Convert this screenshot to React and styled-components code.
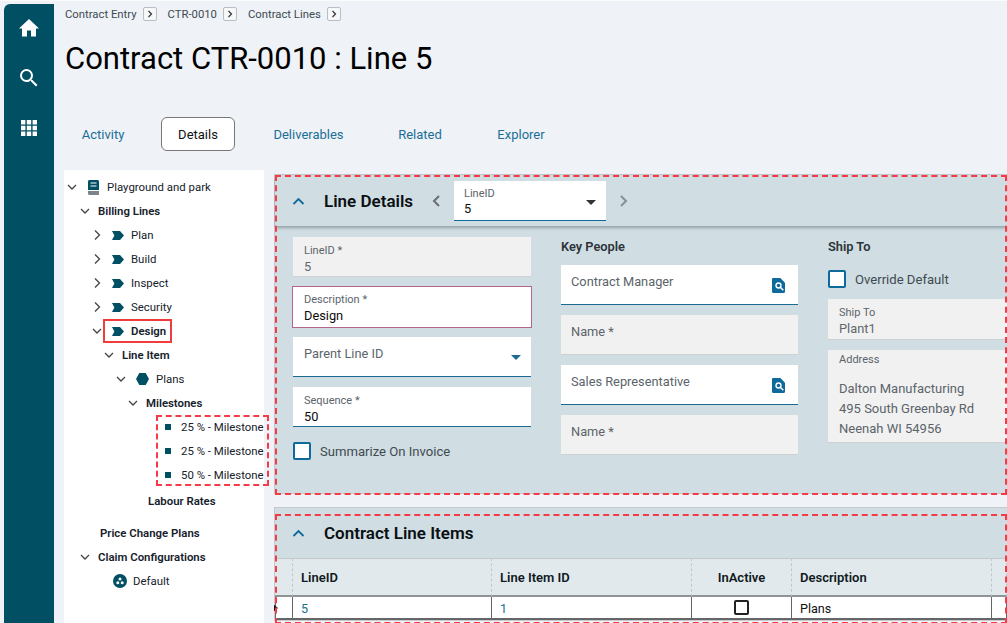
import React from "react";
import styled, { createGlobalStyle } from "styled-components";

const FONT = `Roboto, "Noto Sans", sans-serif`;
const TEAL = "#004f63";
const BLUE = "#0f6a9c";

const Global = createGlobalStyle`
  html, body { margin: 0; padding: 0; height: 100%; overflow: hidden; }
  body { background: #eff2f6; font-family: ${FONT}; }
  #root { height: 100%; }
  * { box-sizing: border-box; }
`;

const Page = styled.div`
  display: flex;
  height: 623px;
  width: 1007px;
  padding: 3px 0 0 4px;
  border-top: 1px solid #fafafa;
  overflow: hidden;
  position: relative;
`;
const Rail = styled.nav`
  flex: 0 0 50px;
  background: ${TEAL};
  border-top-left-radius: 6px;
  display: flex;
  flex-direction: column;
  align-items: center;
  padding-top: 12px;
  gap: 26px;
`;
const RailIcon = styled.svg`
  width: 24px;
  height: 24px;
  fill: #fff;
  display: block;
`;
const Main = styled.main`
  flex: 1;
  min-width: 0;
  display: flex;
  flex-direction: column;
  padding-left: 10px;
`;
const Crumbs = styled.div`
  display: flex;
  align-items: center;
  height: 22px;
  margin-top: -1px;
  font-size: 11.3px;
  color: #3c4a52;
`;
const Crumb = styled.span`
  margin-left: ${(p) => p.$gap}px;
`;
const CrumbBtn = styled.span`
  width: 14px;
  height: 14px;
  margin-left: 6px;
  border: 1px solid #b9bec2;
  border-radius: 2px;
  background: #f6f7f8;
  display: flex;
  align-items: center;
  justify-content: center;
`;
const Title = styled.h1`
  margin: 12px 0 0 1px;
  height: 44px;
  font-size: 31px;
  line-height: 44px;
  font-weight: 400;
  color: #000;
  white-space: nowrap;
`;
const Tabs = styled.div`
  display: flex;
  align-items: center;
  height: 34px;
  margin-top: 36px;
  font-size: 13px;
`;
const Tab = styled.span`
  color: #1b6f96;
  width: ${(p) => p.$w}px;
  height: 34px;
  display: flex;
  align-items: center;
  justify-content: center;
  margin-left: ${(p) => p.$ml || 0}px;
`;
const ActiveTab = styled(Tab)`
  color: #111;
  background: #fff;
  border: 1px solid #777;
  border-radius: 6px;
`;
const Content = styled.div`
  display: flex;
  margin-top: 19px;
  flex: 1;
  min-height: 0;
  gap: 10px;
`;
const Tree = styled.aside`
  flex: 0 0 200px;
  min-width: 0;
  background: #fff;
  padding-top: 5px;
  font-size: 11.4px;
  color: #15212b;
`;
const Row = styled.div`
  display: flex;
  align-items: center;
  height: ${(p) => p.$h || 24}px;
  padding-left: ${(p) => p.$indent}px;
  margin-top: ${(p) => p.$mt || 0}px;
  white-space: nowrap;
  font-weight: ${(p) => (p.$bold ? 600 : 400)};
  position: relative;
`;
const ChevSlot = styled.span`
  width: 16px;
  display: flex;
  justify-content: center;
  flex: none;
`;
const NodeIcon = styled.svg`
  flex: none;
  margin-left: ${(p) => p.$ml ?? 6}px;
  margin-right: ${(p) => p.$mr ?? 6}px;
`;
const Label = styled.span`
  margin-left: ${(p) => p.$ml || 0}px;
`;
const Solid = styled.div`
  position: absolute;
  left: 103px;
  top: 318px;
  width: 69px;
  height: 24px;
  border: 2px solid #ef3d3d;
  pointer-events: none;
`;
const Dash = styled.div`
  position: absolute;
  left: ${(p) => p.$x}px;
  top: ${(p) => p.$y}px;
  width: ${(p) => p.$w}px;
  height: ${(p) => p.$h}px;
  border: 2px dashed #f43b46;
  pointer-events: none;
  z-index: 5;
`;
const Panels = styled.div`
  flex: 1;
  min-width: 0;
  display: flex;
  flex-direction: column;
  padding-top: 4px;
  overflow: hidden;
`;
const Panel = styled.section`
  background: #d0dde3;
  border: 1px solid #c4c9cc;
  border-right: 0;
  height: ${(p) => p.$h}px;
  margin-top: ${(p) => p.$mt || 0}px;
  flex: none;
`;
const PanelHead = styled.header`
  display: flex;
  align-items: center;
  height: ${(p) => p.$h}px;
  padding-left: 17px;
  box-shadow: ${(p) => (p.$shadow ? "0 2px 3px rgba(70,90,100,.45)" : "none")};
  position: relative;
`;
const PanelTitle = styled.h2`
  margin: 0 0 0 19px;
  width: ${(p) => p.$w || "auto"};
  font-size: 17px;
  font-weight: 600;
  color: #0a0f12;
  white-space: nowrap;
`;
const FieldLabel = styled.div`
  font-size: 11px;
  line-height: 14px;
  color: #5b646b;
  white-space: nowrap;
`;
const FieldValue = styled.div`
  font-size: 12.8px;
  line-height: 17px;
  color: ${(p) => (p.$muted ? "#5f676d" : "#0c0c0c")};
  white-space: nowrap;
`;
const Picker = styled.div`
  width: 152px;
  height: 40px;
  background: #fff;
  border-bottom: 1px solid ${BLUE};
  padding: 6px 10px 0;
  position: relative;
  margin: 0 14px 0 14px;
  ${FieldValue} {
    margin-top: -1px;
  }
`;
const Caret = styled.span`
  position: absolute;
  right: ${(p) => p.$r || 10}px;
  bottom: ${(p) => p.$b || 11}px;
  width: 0;
  height: 0;
  border-left: 5px solid transparent;
  border-right: 5px solid transparent;
  border-top: 5px solid ${(p) => p.$c || "#333"};
`;
const Columns = styled.div`
  display: flex;
  padding: 11px 0 0 18px;
  gap: 30px;
`;
const Column = styled.div`
  width: ${(p) => p.$w}px;
  flex: none;
  display: flex;
  flex-direction: column;
  gap: 10px;
`;
const ColumnTitle = styled.div`
  font-size: 12.8px;
  line-height: 20px;
  font-weight: 600;
  color: #2c343a;
  height: 18px;
`;
const Field = styled.div`
  position: relative;
  height: ${(p) => p.$h || 40}px;
  padding: ${(p) => (p.$big ? "8px 10px 0" : "7px 11px 0")};
  background: ${(p) => (p.$grey ? "#f1f1f1" : "#fff")};
  border-bottom: 1px solid ${(p) => (p.$grey ? "#cdd1d3" : "#1a6a93")};
  flex: none;
`;
const AddressField = styled(Field)`
  padding-top: 3px;
`;
const AddressLines = styled.div`
  margin-top: 12px;
`;
const FocusField = styled(Field)`
  height: 42px;
  margin: -1px;
  border: 1px solid #b5648c;
  width: 240px;
  padding: 6px 11px 0;
`;
const BigLabel = styled.div`
  font-size: 12.8px;
  line-height: 18px;
  color: #5b646b;
  white-space: nowrap;
  padding-left: ${(p) => p.$pl || 0}px;
`;
const CheckRow = styled.div`
  display: flex;
  align-items: center;
  gap: 9px;
  font-size: 13.1px;
  color: #404a50;
  height: 18px;
  margin-top: 5px;
  margin-bottom: ${(p) => p.$mb || 0}px;
  white-space: nowrap;
`;
const Box = styled.span`
  width: 18px;
  height: 18px;
  border: 2px solid ${BLUE};
  border-radius: 2px;
  background: #fff;
  flex: none;
`;
const AddrLine = styled.div`
  font-size: 13px;
  line-height: 20px;
  color: #5b646b;
  white-space: nowrap;
`;
const Lookup = styled.svg`
  position: absolute;
  right: 13px;
  top: 13px;
`;
const Table = styled.div`
  display: grid;
  grid-template-columns: 18px 199px 200px 100px 200px 1fr;
`;
const Th = styled.div`
  height: 39px;
  background: #e2e9ed;
  border-top: 1px solid #c4c9cc;
  border-bottom: 2px solid #8f9497;
  border-right: 1px dashed #c2c7ca;
  display: flex;
  align-items: center;
  justify-content: ${(p) => (p.$center ? "center" : "flex-start")};
  padding-left: ${(p) => (p.$center ? 0 : 8)}px;
  padding-top: 1px;
  font-size: 13px;
  font-weight: 600;
  color: #0f1a22;
`;
const Td = styled.div`
  height: 23px;
  background: #fff;
  border-right: 1px solid #666;
  border-bottom: 2px solid #666;
  display: flex;
  align-items: center;
  justify-content: ${(p) => (p.$center ? "center" : "flex-start")};
  padding-left: ${(p) => (p.$center ? 0 : 8)}px;
  padding-top: ${(p) => (p.$center ? 0 : 1)}px;
  font-size: 12.6px;
  color: ${(p) => (p.$link ? "#1b6f96" : "#111")};
`;
const Marker = styled(Td)`
  border-left: 1px solid #666;
  padding-left: 0;
  color: #111;
`;
const CellBox = styled.span`
  width: 15px;
  height: 15px;
  border: 2px solid #222;
  border-radius: 2px;
`;

const Chev = ({ dir }) => (
  <svg width="12" height="12" viewBox="0 0 12 12" fill="none" stroke="#444" strokeWidth="1.3">
    {dir === "down" ? <path d="M2 4l4 4 4-4" /> : <path d="M4 1.5l4.5 4.5L4 10.5" />}
  </svg>
);
const Tag = () => (
  <NodeIcon $ml={7} $mr={7} width="12" height="9" viewBox="0 0 12 9">
    <path d="M0 0h8l4 4.5L8 9H0l2.4-4.5z" fill={TEAL} />
  </NodeIcon>
);
const Lens = () => (
  <Lookup width="13" height="15" viewBox="0 0 14 16">
    <path d="M0 1.2C0 .5.5 0 1.2 0H9l5 5v9.8c0 .7-.5 1.2-1.2 1.2H1.2C.5 16 0 15.5 0 14.8z" fill={BLUE} />
    <circle cx="7" cy="8" r="3.4" fill="#fff" />
    <circle cx="7" cy="8" r="1.9" fill={BLUE} />
    <path d="M9.2 10.2l3 3" stroke="#fff" strokeWidth="1.6" />
  </Lookup>
);
const CrumbArrow = () => (
  <svg width="6" height="8" viewBox="0 0 6 8" fill="none" stroke="#333" strokeWidth="1.2"><path d="M1.5 1l3 3-3 3" /></svg>
);
const CollapseIcon = () => (
  <svg width="13" height="8" viewBox="0 0 13 8" fill="none" stroke={BLUE} strokeWidth="1.8"><path d="M1.5 7l5-5 5 5" /></svg>
);

const milestones = ["25 % - Milestone", "25 % - Milestone", "50 % - Milestone"];

export default function App() {
  return (
    <Page>
      <Global />
      <Rail>
        <RailIcon viewBox="0 0 24 24"><path d="M10 20.5v-6h4v6h5v-8h3L12 3 2 12.5h3v8z" /></RailIcon>
        <RailIcon viewBox="0 0 24 24"><path d="M15.5 14h-.79l-.28-.27A6.47 6.47 0 0 0 16 9.5 6.5 6.5 0 1 0 9.5 16c1.61 0 3.09-.59 4.23-1.57l.27.28v.79l5 4.99L20.49 19zm-6 0C7.01 14 5 11.99 5 9.5S7.01 5 9.5 5 14 7.01 14 9.5 11.99 14 9.5 14z" /></RailIcon>
        <RailIcon viewBox="0 0 24 24"><path d="M4 4h4.4v4.4H4zM9.8 4h4.4v4.4H9.8zM15.6 4H20v4.4h-4.4zM4 9.8h4.4v4.4H4zM9.8 9.8h4.4v4.4H9.8zM15.6 9.8H20v4.4h-4.4zM4 15.6h4.4V20H4zM9.8 15.6h4.4V20H9.8zM15.6 15.6H20V20h-4.4z" /></RailIcon>
      </Rail>
      <Main>
        <Crumbs>
          <Crumb $gap={1}>Contract Entry</Crumb>
          <CrumbBtn><CrumbArrow /></CrumbBtn>
          <Crumb $gap={11}>CTR-0010</Crumb>
          <CrumbBtn><CrumbArrow /></CrumbBtn>
          <Crumb $gap={11}>Contract Lines</Crumb>
          <CrumbBtn><CrumbArrow /></CrumbBtn>
        </Crumbs>
        <Title>Contract CTR-0010 : Line 5</Title>
        <Tabs>
          <Tab $w={78}>Activity</Tab>
          <ActiveTab $w={74} $ml={19}>Details</ActiveTab>
          <Tab $w={109} $ml={19}>Deliverables</Tab>
          <Tab $w={70} $ml={22}>Related</Tab>
          <Tab $w={80} $ml={26}>Explorer</Tab>
        </Tabs>
        <Content>
          <Tree>
            <Row $indent={0}>
              <ChevSlot><Chev dir="down" /></ChevSlot>
              <NodeIcon $ml={7} $mr={7} width="13" height="15" viewBox="0 0 13 15">
                <path d="M1 1.5C1 .7 1.7 0 2.5 0h8c.8 0 1.5.7 1.5 1.5V10H1z" fill={TEAL} />
                <path d="M3.5 3h6M3.5 6h6" stroke="#fff" strokeWidth="1.2" />
                <path d="M1 11h11v4H2.5C1.7 15 1 14.3 1 13.5z" fill="#7b8488" />
              </NodeIcon>
              <Label>Playground and park</Label>
            </Row>
            <Row $indent={13} $bold><ChevSlot><Chev dir="down" /></ChevSlot><Label $ml={5}>Billing Lines</Label></Row>
            {["Plan", "Build", "Inspect", "Security"].map((t) => (
              <Row $indent={25} key={t}><ChevSlot><Chev dir="right" /></ChevSlot><Tag /><Label>{t}</Label></Row>
            ))}
            <Row $indent={25} $bold><ChevSlot><Chev dir="down" /></ChevSlot><Tag /><Label>Design</Label></Row>
            <Row $indent={37} $bold><ChevSlot><Chev dir="down" /></ChevSlot><Label $ml={5}>Line Item</Label></Row>
            <Row $indent={49}>
              <ChevSlot><Chev dir="down" /></ChevSlot>
              <NodeIcon $ml={7} $mr={7} width="13" height="12" viewBox="0 0 13 12"><path d="M3.3 0h6.4L13 6l-3.3 6H3.3L0 6z" fill={TEAL} /></NodeIcon>
              <Label>Plans</Label>
            </Row>
            <Row $indent={61} $bold><ChevSlot><Chev dir="down" /></ChevSlot><Label $ml={5}>Milestones</Label></Row>
            {milestones.map((t, i) => (
              <Row $indent={101} key={i}>
                <NodeIcon $ml={0} $mr={10} width="6" height="6" viewBox="0 0 6 6"><rect width="6" height="6" fill={TEAL} /></NodeIcon>
                <Label>{t}</Label>
              </Row>
            ))}
            <Row $indent={84} $bold $mt={2}><Label>Labour Rates</Label></Row>
            <Row $indent={36} $bold $mt={8}><Label>Price Change Plans</Label></Row>
            <Row $indent={13} $bold><ChevSlot><Chev dir="down" /></ChevSlot><Label $ml={5}>Claim Configurations</Label></Row>
            <Row $indent={49}>
              <NodeIcon $ml={0} width="14" height="14" viewBox="0 0 14 14">
                <circle cx="7" cy="7" r="7" fill={TEAL} />
                <circle cx="7" cy="5" r="1.5" fill="#fff" /><circle cx="4.8" cy="8.8" r="1.5" fill="#fff" /><circle cx="9.2" cy="8.8" r="1.5" fill="#fff" />
              </NodeIcon>
              <Label>Default</Label>
            </Row>
          </Tree>
          <Panels>
            <Panel $h={320}>
              <PanelHead $h={51} $shadow>
                <CollapseIcon />
                <PanelTitle $w="108px">Line Details</PanelTitle>
                <svg width="8" height="12" viewBox="0 0 8 12" fill="none" stroke="#6a6f73" strokeWidth="2"><path d="M7 1L2 6l5 5" /></svg>
                <Picker>
                  <FieldLabel>LineID</FieldLabel>
                  <FieldValue>5</FieldValue>
                  <Caret $r={10} $b={15} />
                </Picker>
                <svg width="8" height="12" viewBox="0 0 8 12" fill="none" stroke="#8b9094" strokeWidth="2"><path d="M1 1l5 5-5 5" /></svg>
              </PanelHead>
              <Columns>
                <Column $w={238}>
                  <Field $grey>
                    <FieldLabel>LineID *</FieldLabel>
                    <FieldValue $muted>5</FieldValue>
                  </Field>
                  <FocusField>
                    <FieldLabel>Description *</FieldLabel>
                    <FieldValue>Design</FieldValue>
                  </FocusField>
                  <Field $big>
                    <BigLabel $pl={1}>Parent Line ID</BigLabel>
                    <Caret $c="#1a6a93" $r={10} $b={16} />
                  </Field>
                  <Field>
                    <FieldLabel>Sequence *</FieldLabel>
                    <FieldValue>50</FieldValue>
                  </Field>
                  <CheckRow><Box />Summarize On Invoice</CheckRow>
                </Column>
                <Column $w={237}>
                  <ColumnTitle>Key People</ColumnTitle>
                  <Field $big><BigLabel>Contract Manager</BigLabel><Lens /></Field>
                  <Field $grey $big><BigLabel>Name *</BigLabel></Field>
                  <Field $big><BigLabel>Sales Representative</BigLabel><Lens /></Field>
                  <Field $grey $big><BigLabel>Name *</BigLabel></Field>
                </Column>
                <Column $w={200}>
                  <ColumnTitle>Ship To</ColumnTitle>
                  <CheckRow $mb={1}><Box />Override Default</CheckRow>
                  <Field $grey $h={41}>
                    <FieldLabel>Ship To</FieldLabel>
                    <FieldValue $muted>Plant1</FieldValue>
                  </Field>
                  <AddressField $grey $h={93}>
                    <FieldLabel>Address</FieldLabel>
                    <AddressLines>
                      <AddrLine>Dalton Manufacturing</AddrLine>
                      <AddrLine>495 South Greenbay Rd</AddrLine>
                      <AddrLine>Neenah WI 54956</AddrLine>
                    </AddressLines>
                  </AddressField>
                </Column>
              </Columns>
            </Panel>
            <Panel $h={114} $mt={13}>
              <PanelHead $h={50}>
                <CollapseIcon />
                <PanelTitle>Contract Line Items</PanelTitle>
              </PanelHead>
              <Table>
                <Th />
                <Th>LineID</Th>
                <Th>Line Item ID</Th>
                <Th $center>InActive</Th>
                <Th>Description</Th>
                <Th />
                <Marker><svg width="6" height="10" viewBox="0 0 6 10" style={{ marginLeft: -3 }}><path d="M0 1l5 4-5 4z" fill="#111" /></svg></Marker>
                <Td $link>5</Td>
                <Td $link>1</Td>
                <Td $center><CellBox /></Td>
                <Td>Plans</Td>
                <Td />
              </Table>
            </Panel>
          </Panels>
        </Content>
      </Main>
      <Solid />
      <Dash $x={156} $y={414} $w={113} $h={71} />
      <Dash $x={275} $y={174} $w={732} $h={320} />
      <Dash $x={275} $y={513} $w={732} $h={110} />
    </Page>
  );
}
